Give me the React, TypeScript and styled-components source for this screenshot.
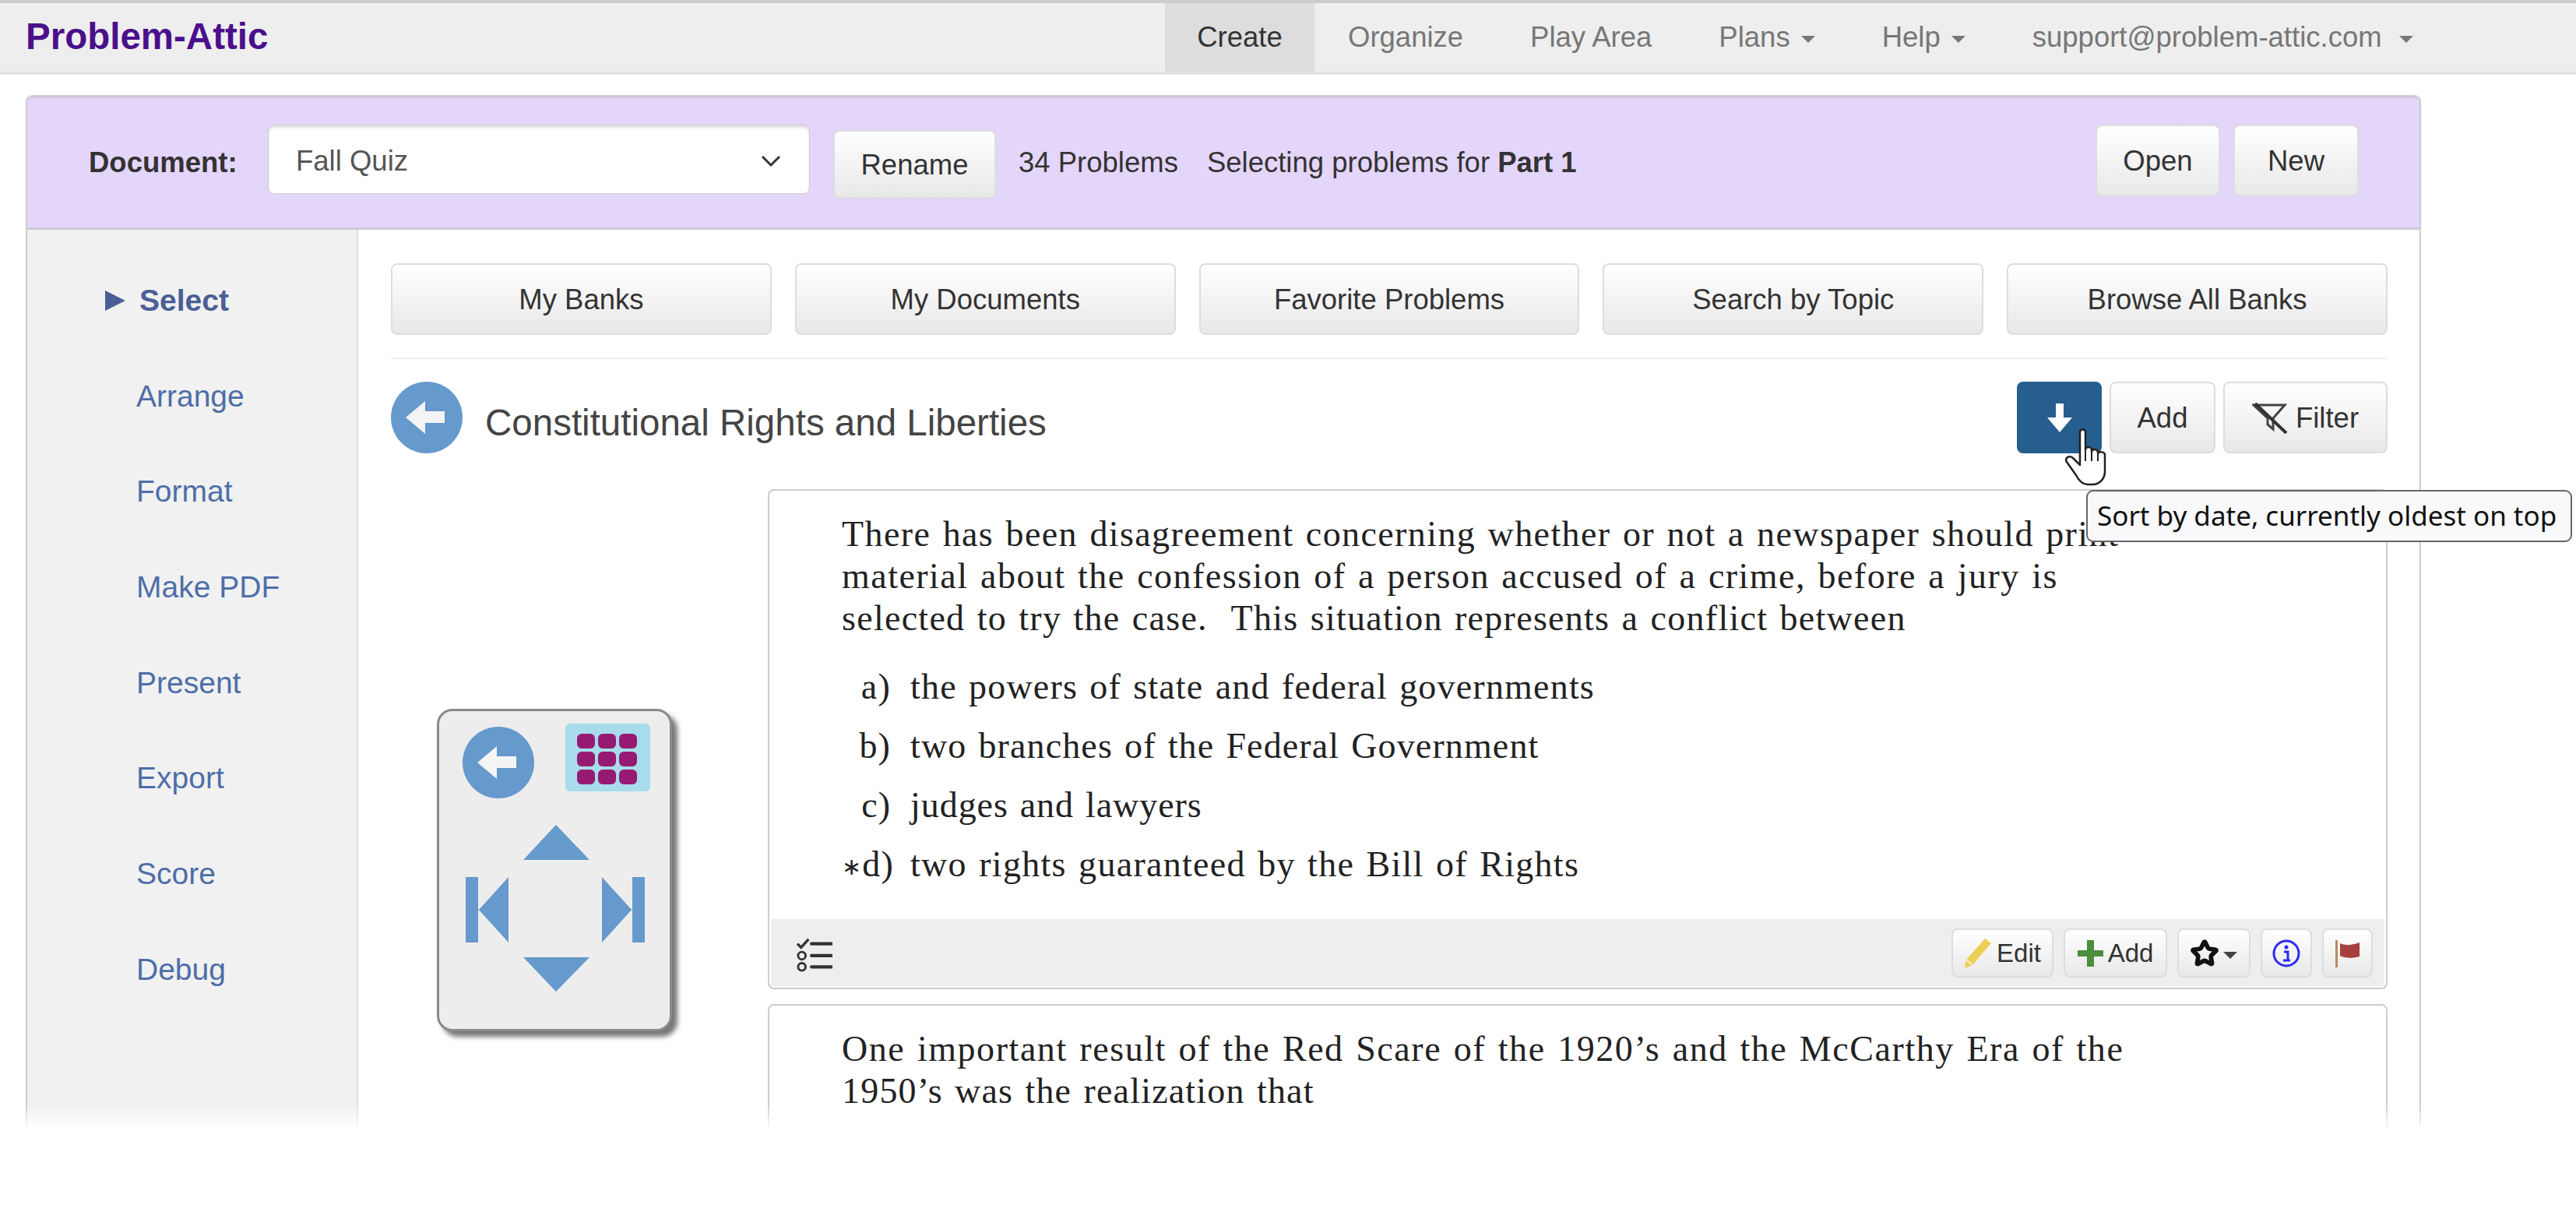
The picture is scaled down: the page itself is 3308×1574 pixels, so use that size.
import styled, { createGlobalStyle } from "styled-components";
import { Star } from "lucide-react";

const GlobalStyle = createGlobalStyle`
  html, body {
    margin: 0;
    padding: 0;
    background: #fff;
  }
  body {
    width: 3308px;
    height: 1574px;
    overflow: hidden;
    font-family: "Liberation Sans", Arial, sans-serif;
    font-size: 36.5px;
    color: #333;
  }
  * {
    box-sizing: border-box;
  }
`;

const Page = styled.div`
  position: relative;
  height: 1574px;
  overflow: hidden;
`;

const Navbar = styled.nav`
  display: flex;
  height: 96px;
  padding-left: 33px;
  background: #eee;
  border-top: 4px solid #ccc;
  border-bottom: 4px solid #e3e3e3;
`;

const Brand = styled.div`
  width: 1463px;
  color: #4b0f8c;
  font-weight: 700;
  font-size: 47.5px;
  line-height: 86px;
`;

const NavLink = styled.div<{ $active?: boolean }>`
  display: flex;
  align-items: center;
  justify-content: center;
  gap: 14px;
  width: ${(p) => (p.$active ? "192px" : "auto")};
  height: 88px;
  padding: 0 ${(p) => (p.$active ? "0" : "43px")};
  color: ${(p) => (p.$active ? "#333" : "#777")};
  background: ${(p) => (p.$active ? "#ddd" : "transparent")};
`;

const Caret = styled.span<{ $color?: string; $gap?: number }>`
  display: inline-block;
  width: 0;
  height: 0;
  margin-top: 4px;
  margin-left: ${(p) => p.$gap ?? 0}px;
  border-top: 9px solid ${(p) => p.$color ?? "#777"};
  border-left: 9px solid transparent;
  border-right: 9px solid transparent;
`;

const Panel = styled.section`
  position: relative;
  width: 3076px;
  height: 1452px;
  margin: 26px 0 0 33px;
  border-right: 2px solid #ccc;
  border-left: 2px solid #ccc;
  border-radius: 8px 8px 0 0;
`;

const DocBar = styled.header`
  display: flex;
  align-items: center;
  height: 173px;
  padding: 0 78px 0 79px;
  background: #e4d5fa;
  border-top: 4px solid #d0c8da;
  border-bottom: 3px solid #cfc8d8;
  border-radius: 8px 8px 0 0;
`;

const DocLabel = styled.span`
  width: 230px;
  font-weight: 700;
`;

const DocSelect = styled.div`
  display: flex;
  align-items: center;
  justify-content: space-between;
  width: 696px;
  height: 89px;
  margin-bottom: 9px;
  padding: 4px 36px 0 35px;
  color: #555;
  background: #fff;
  border: 1px solid #ccc;
  border-radius: 8px;
  box-shadow: inset 0 3px 3px rgba(0, 0, 0, 0.12);
`;

const Button = styled.button<{ $w?: number; $h?: number }>`
  display: inline-flex;
  align-items: center;
  justify-content: center;
  gap: 8px;
  width: ${(p) => (p.$w ? `${p.$w}px` : "auto")};
  height: ${(p) => p.$h ?? 92}px;
  padding: 2px 0 0;
  color: #333;
  font-family: inherit;
  font-size: 36.5px;
  background: linear-gradient(to bottom, #fff, #e8e8e8);
  border: 2px solid #ddd;
  border-radius: 8px;
`;

const RenameButton = styled(Button)`
  margin: 4px 29px 0 30px;
`;

const Count = styled.span`
  margin-right: 37px;
`;

const DocActions = styled.div`
  display: flex;
  gap: 17px;
  margin-bottom: 6px;
  margin-left: auto;
`;

const Body = styled.div`
  display: flex;
  height: 1275px;
`;

const Sidebar = styled.aside`
  display: flex;
  flex-direction: column;
  width: 425px;
  padding-top: 30px;
  background: #f1f1f1;
  border-right: 2px solid #ddd;
`;

const SideItem = styled.div<{ $active?: boolean }>`
  position: relative;
  height: 122.7px;
  padding-left: ${(p) => (p.$active ? 144 : 140)}px;
  color: ${(p) => (p.$active ? "#4a5f96" : "#4e6ea8")};
  font-weight: ${(p) => (p.$active ? 700 : 400)};
  font-size: 39px;
  line-height: 122.7px;
`;

const SideMarker = styled.span`
  position: absolute;
  top: 50%;
  left: 100px;
  width: 0;
  height: 0;
  margin-top: -13px;
  border-top: 13px solid transparent;
  border-bottom: 13px solid transparent;
  border-left: 26px solid #4a5f96;
`;

const Main = styled.main`
  flex: 1;
  padding: 43px 41px 0 42px;
`;

const TabRow = styled.div`
  display: flex;
  gap: 30px;
  padding-bottom: 29px;
  border-bottom: 2px solid #eee;
`;

const TabButton = styled(Button)`
  flex: 1;
`;

const TitleRow = styled.div`
  display: flex;
  align-items: center;
  height: 92px;
  margin-top: 29px;
`;

const Title = styled.h2`
  margin: 12px 0 0 29px;
  color: #444;
  font-weight: 400;
  font-size: 47.5px;
`;

const TitleActions = styled.div`
  display: flex;
  gap: 10px;
  margin-left: auto;
`;

const SortWrap = styled.div`
  position: relative;
`;

const SortButton = styled(Button)`
  background: #255e8f;
  border-color: #255e8f;
`;

const Cursor = styled.svg`
  position: absolute;
  top: 60px;
  left: 61px;
  z-index: 3;
`;

const Tooltip = styled.div`
  position: absolute;
  top: 139px;
  left: 89px;
  z-index: 4;
  width: 624px;
  height: 67px;
  padding-left: 12px;
  color: #111;
  font-family: "Noto Sans", sans-serif;
  font-size: 35px;
  line-height: 61px;
  white-space: nowrap;
  background: #f9f9fb;
  border: 2px solid #666;
  border-radius: 9px;
`;

const Content = styled.div`
  display: flex;
  margin-top: 46px;
`;

const PadColumn = styled.div`
  flex: none;
  width: 484px;
  padding: 282px 0 0 59px;
`;

const NavPad = styled.div`
  width: 302px;
  height: 414px;
  background: #ededed;
  border: 3px solid #8a8a8a;
  border-radius: 20px;
  box-shadow: 7px 7px 6px #777;
`;

const Cards = styled.div`
  display: flex;
  flex: 1;
  flex-direction: column;
  gap: 19px;
`;

const Card = styled.article<{ $h: number }>`
  display: flex;
  flex-direction: column;
  height: ${(p) => p.$h}px;
  background: #fff;
  border: 2px solid #ccc;
  border-radius: 8px;
`;

const Prompt = styled.div`
  padding: 29px 0 0 93px;
  color: #222;
  font-family: "Liberation Serif", "Times New Roman", serif;
  font-size: 46px;
  word-spacing: 2.5px;
`;

const PromptLine = styled.div<{ $ls: number }>`
  height: 54px;
  line-height: 54px;
  letter-spacing: ${(p) => p.$ls}px;
  white-space: pre;
`;

const Options = styled.div`
  padding: 23px 0 0 93px;
  color: #222;
  font-family: "Liberation Serif", "Times New Roman", serif;
  font-size: 46px;
  word-spacing: 2.5px;
`;

const Option = styled.div<{ $ls: number }>`
  display: flex;
  height: 76px;
  line-height: 76px;
  letter-spacing: ${(p) => p.$ls}px;
  white-space: nowrap;
`;

const OptionKey = styled.span`
  width: 63px;
  margin-right: 25px;
  text-align: right;
`;

const AnswerMark = styled.span`
  font-size: 30px;
  vertical-align: 2px;
`;

const CardFooter = styled.footer`
  display: flex;
  align-items: center;
  justify-content: space-between;
  height: 86px;
  margin: auto 2px 2px 2px;
  padding: 0 15px 0 33px;
  background: #eee;
`;

const ChecklistIcon = styled.svg`
  margin-top: 6px;
`;

const FooterActions = styled.div`
  display: flex;
  gap: 13px;
`;

const SmallButton = styled(Button)`
  gap: 6px;
  height: 63px;
  font-size: 33px;
`;

const Fade = styled.div`
  position: absolute;
  right: -4px;
  bottom: 0;
  left: -4px;
  height: 157px;
  background: linear-gradient(to bottom, rgba(255, 255, 255, 0), #fff 34px);
  pointer-events: none;
`;

const sideItems = ["Arrange", "Format", "Make PDF", "Present", "Export", "Score", "Debug"];
const tabs = ["My Banks", "My Documents", "Favorite Problems", "Search by Topic", "Browse All Banks"];
const promptLines: [string, number][] = [
  ["There has been disagreement concerning whether or not a newspaper should print", 1.4],
  ["material about the confession of a person accused of a crime, before a jury is", 1.48],
  ["selected to try the case.  This situation represents a conflict between", 1.28],
];
const options: [string, string, number][] = [
  ["a)", "the powers of state and federal governments", 1.2],
  ["b)", "two branches of the Federal Government", 1.12],
  ["c)", "judges and lawyers", 0.95],
  ["d)", "two rights guaranteed by the Bill of Rights", 1.3],
];

const backArrow = "M19 46 L44 25 V38 H69 V53 H44 V67 Z";

function BackCircle() {
  return (
    <svg width="92" height="92" viewBox="0 0 92 92">
      <circle cx="46" cy="46" r="46" fill="#6699cc" />
      <path d={backArrow} fill="#f4f4f4" />
    </svg>
  );
}

function PadDrawing() {
  const dots = [0, 1, 2].flatMap((r) => [0, 1, 2].map((c) => [c, r]));
  return (
    <svg width="296" height="408" viewBox="0 0 296 408">
      <g transform="translate(30 20)">
        <circle cx="46" cy="46" r="46" fill="#6699cc" />
        <path d={backArrow} fill="#f4f4f4" />
      </g>
      <rect x="162" y="16" width="109" height="87" rx="6" fill="#a8dcea" />
      {dots.map(([c, r]) => (
        <rect key={`${c}-${r}`} x={177 + c * 27} y={29 + r * 23} width="23" height="19" rx="6" fill="#961a72" />
      ))}
      <path d="M108 191 L150 146 L193 191 Z" fill="#6699cc" />
      <path d="M108 316 H193 L150 360 Z" fill="#6699cc" />
      <path d="M34 213 H50 V256 L89 213 V297 L50 254 V297 H34 Z" fill="#6699cc" />
      <path d="M264 213 H248 V256 L209 213 V297 L248 254 V297 H264 Z" fill="#6699cc" />
    </svg>
  );
}

function Hand() {
  return (
    <Cursor width="56" height="74" viewBox="0 0 56 74">
      <path
        d="M20 5 C20 0 27 0 27 5 V27 C28 23 34 23 35 27 V30 C36 26 42 26 43 30 V32 C45 29 52 30 52 34 V55 C52 64 46 72 36 72 H30 C24 72 19 68 15 60 L3 43 C0 38 6 34 11 38 L20 47 Z"
        fill="#fff"
        stroke="#222"
        strokeWidth="2.5"
        strokeLinejoin="round"
      />
      <path d="M27 28 V42 M35 30 V42 M43 32 V42" stroke="#222" strokeWidth="2" fill="none" />
    </Cursor>
  );
}

function FilterIcon() {
  return (
    <svg width="48" height="40" viewBox="0 0 48 40" fill="none">
      <path d="M2 3 H42 L27 20 V34 L20 28 V20 Z" stroke="#444" strokeWidth="3" />
      <path d="M4 1 L44 39" stroke="#333" strokeWidth="4" />
    </svg>
  );
}

function Checklist() {
  return (
    <ChecklistIcon width="46" height="46" viewBox="0 0 48 46" fill="none" stroke="#333">
      <path d="M1 8 L6 13 L16 2" strokeWidth="3.5" />
      <path d="M20 8 H47 M20 24 H47 M20 39 H47" strokeWidth="4.5" strokeLinecap="round" />
      <circle cx="7" cy="24" r="5" strokeWidth="3" />
      <circle cx="7" cy="39" r="5" strokeWidth="3" />
    </ChecklistIcon>
  );
}

function Pencil() {
  return (
    <svg width="36" height="40" viewBox="0 0 36 40">
      <path d="M27 1 L35 7 L11 35 L1 39 L3 28 Z" fill="#eecf55" />
      <path d="M3 28 L11 35" stroke="#f7f0cc" strokeWidth="2" />
    </svg>
  );
}

function Plus() {
  return (
    <svg width="33" height="38" viewBox="0 0 33 38">
      <path d="M12 2 H21 V15 H33 V23 H21 V36 H12 V23 H0 V15 H12 Z" fill="#4a8f3c" />
    </svg>
  );
}

function InfoIcon() {
  return (
    <svg width="36" height="38" viewBox="0 0 36 38" fill="none">
      <circle cx="18" cy="19" r="16" stroke="#2a2af0" strokeWidth="3" />
      <path d="M15 17 H20 V28 M14 28 H23" stroke="#2a2af0" strokeWidth="3" />
      <circle cx="18" cy="11" r="2.5" fill="#2a2af0" />
    </svg>
  );
}

function FlagIcon() {
  return (
    <svg width="32" height="38" viewBox="0 0 32 38">
      <rect x="0" y="2" width="3" height="35" fill="#b98a5c" />
      <path d="M6 6 C12 9 20 9 31 5 V23 C20 26 12 25 6 22 Z" fill="#a83f3f" />
    </svg>
  );
}

export default function App() {
  return (
    <Page>
      <GlobalStyle />
      <Navbar>
        <Brand>Problem-Attic</Brand>
        <NavLink $active>Create</NavLink>
        <NavLink>Organize</NavLink>
        <NavLink>Play Area</NavLink>
        <NavLink>
          Plans <Caret />
        </NavLink>
        <NavLink>
          Help <Caret />
        </NavLink>
        <NavLink>
          support@problem-attic.com <Caret $gap={8} />
        </NavLink>
      </Navbar>
      <Panel>
        <DocBar>
          <DocLabel>Document:</DocLabel>
          <DocSelect>
            Fall Quiz
            <svg width="26" height="16" viewBox="0 0 26 16" fill="none">
              <path d="M2 2 L13 13 L24 2" stroke="#333" strokeWidth="3" />
            </svg>
          </DocSelect>
          <RenameButton $w={209} $h={88}>Rename</RenameButton>
          <Count>34 Problems</Count>
          <span>
            Selecting problems for <b>Part 1</b>
          </span>
          <DocActions>
            <Button $w={160}>Open</Button>
            <Button $w={161}>New</Button>
          </DocActions>
        </DocBar>
        <Body>
          <Sidebar>
            <SideItem $active>
              <SideMarker />
              Select
            </SideItem>
            {sideItems.map((item) => (
              <SideItem key={item}>{item}</SideItem>
            ))}
          </Sidebar>
          <Main>
            <TabRow>
              {tabs.map((tab) => (
                <TabButton key={tab}>{tab}</TabButton>
              ))}
            </TabRow>
            <TitleRow>
              <BackCircle />
              <Title>Constitutional Rights and Liberties</Title>
              <TitleActions>
                <SortWrap>
                  <SortButton $w={109}>
                    <svg width="34" height="38" viewBox="0 0 34 38">
                      <path d="M12 0 H22 V18 H33 L17 37 L1 18 H12 Z" fill="#fff" />
                    </svg>
                  </SortButton>
                  <Hand />
                  <Tooltip>Sort by date, currently oldest on top</Tooltip>
                </SortWrap>
                <Button $w={136}>Add</Button>
                <Button $w={211}>
                  <FilterIcon />
                  Filter
                </Button>
              </TitleActions>
            </TitleRow>
            <Content>
              <PadColumn>
                <NavPad>
                  <PadDrawing />
                </NavPad>
              </PadColumn>
              <Cards>
                <Card $h={642}>
                  <Prompt>
                    {promptLines.map(([line, ls]) => (
                      <PromptLine key={line} $ls={ls}>{line}</PromptLine>
                    ))}
                  </Prompt>
                  <Options>
                    {options.map(([key, text, ls]) => (
                      <Option key={key} $ls={ls}>
                        <OptionKey>
                          {key === "d)" && <AnswerMark>∗</AnswerMark>}
                          {key}
                        </OptionKey>
                        {text}
                      </Option>
                    ))}
                  </Options>
                  <CardFooter>
                    <Checklist />
                    <FooterActions>
                      <SmallButton $w={131}>
                        <Pencil />
                        Edit
                      </SmallButton>
                      <SmallButton $w={133}>
                        <Plus />
                        Add
                      </SmallButton>
                      <SmallButton $w={94}>
                        <Star size={36} color="#111" strokeWidth={3.8} />
                        <Caret $color="#444" />
                      </SmallButton>
                      <SmallButton $w={66}>
                        <InfoIcon />
                      </SmallButton>
                      <SmallButton $w={65}>
                        <FlagIcon />
                      </SmallButton>
                    </FooterActions>
                  </CardFooter>
                </Card>
                <Card $h={300}>
                  <Prompt>
                    <PromptLine $ls={1.56}>One important result of the Red Scare of the 1920’s and the McCarthy Era of the</PromptLine>
                    <PromptLine $ls={1.2}>1950’s was the realization that</PromptLine>
                  </Prompt>
                </Card>
              </Cards>
            </Content>
          </Main>
        </Body>
        <Fade />
      </Panel>
    </Page>
  );
}
